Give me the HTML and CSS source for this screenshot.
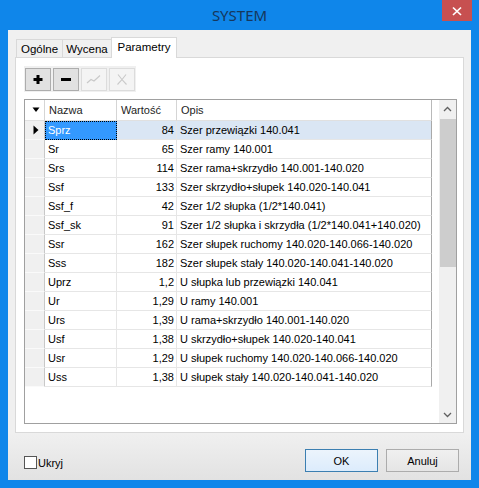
FILE: index.html
```html
<!DOCTYPE html>
<html lang="pl">
<head>
<meta charset="utf-8">
<title>SYSTEM</title>
<link rel="stylesheet" href="styles.css">
</head>
<body>
<div class="window">
  <div class="titlebar">
    <div class="title">SYSTEM</div>
    <div class="close">
      <svg width="30" height="21" viewBox="0 0 30 21"><path d="M11 7.5 L19 15 M19 7.5 L11 15" stroke="#fff" stroke-width="1.7" fill="none"/></svg>
    </div>
  </div>
  <div class="client">
    <div class="tabs">
      <div class="tab t1">Ogólne</div>
      <div class="tab t2">Wycena</div>
      <div class="tab t3 active">Parametry</div>
    </div>
    <div class="panel">
      <div class="toolbar">
        <div class="tbtn">
          <svg width="24" height="21" viewBox="0 0 24 21"><path d="M12 6 V15 M7.5 10.5 H16.5" stroke="#000" stroke-width="3" fill="none"/></svg>
        </div>
        <div class="tbtn">
          <svg width="24" height="21" viewBox="0 0 24 21"><path d="M7 10.5 H17" stroke="#000" stroke-width="3" fill="none"/></svg>
        </div>
        <div class="tbtn disabled">
          <svg width="24" height="21" viewBox="0 0 24 21"><path d="M5 14 L9 10.5 L12 12 L18 6.5" stroke="#c9c9c9" stroke-width="1.2" fill="none"/></svg>
        </div>
        <div class="tbtn disabled">
          <svg width="24" height="21" viewBox="0 0 24 21"><path d="M8 5.5 Q12 11 16.5 15.5 M16 5.5 Q12 11 7.5 15.5" stroke="#c9c9c9" stroke-width="1.1" fill="none"/></svg>
        </div>
      </div>
      <div class="grid">
        <div class="table">
          <div class="row head">
            <div class="cell ind"><svg width="8" height="6" viewBox="0 0 8 6"><path d="M0.5 0.5 H7.5 L4 5 Z" fill="#000"/></svg></div>
            <div class="cell">Nazwa</div>
            <div class="cell">Wartość</div>
            <div class="cell">Opis</div>
          </div>
          <div class="row sel">
            <div class="cell ind"><svg width="6" height="10" viewBox="0 0 6 10"><path d="M0.5 0.5 L5.5 5 L0.5 9.5 Z" fill="#000"/></svg></div>
            <div class="cell name focus">Sprz</div>
            <div class="cell val">84</div>
            <div class="cell">Szer przewiązki 140.041</div>
          </div>
          <div class="row"><div class="cell ind"></div><div class="cell name">Sr</div><div class="cell val">65</div><div class="cell">Szer ramy 140.001</div></div>
          <div class="row"><div class="cell ind"></div><div class="cell name">Srs</div><div class="cell val">114</div><div class="cell">Szer rama+skrzydło 140.001-140.020</div></div>
          <div class="row"><div class="cell ind"></div><div class="cell name">Ssf</div><div class="cell val">133</div><div class="cell">Szer skrzydło+słupek 140.020-140.041</div></div>
          <div class="row"><div class="cell ind"></div><div class="cell name">Ssf_f</div><div class="cell val">42</div><div class="cell">Szer 1/2 słupka (1/2*140.041)</div></div>
          <div class="row"><div class="cell ind"></div><div class="cell name">Ssf_sk</div><div class="cell val">91</div><div class="cell">Szer 1/2 słupka i skrzydła (1/2*140.041+140.020)</div></div>
          <div class="row"><div class="cell ind"></div><div class="cell name">Ssr</div><div class="cell val">162</div><div class="cell">Szer słupek ruchomy 140.020-140.066-140.020</div></div>
          <div class="row"><div class="cell ind"></div><div class="cell name">Sss</div><div class="cell val">182</div><div class="cell">Szer słupek stały 140.020-140.041-140.020</div></div>
          <div class="row"><div class="cell ind"></div><div class="cell name">Uprz</div><div class="cell val">1,2</div><div class="cell">U słupka lub przewiązki 140.041</div></div>
          <div class="row"><div class="cell ind"></div><div class="cell name">Ur</div><div class="cell val">1,29</div><div class="cell">U ramy 140.001</div></div>
          <div class="row"><div class="cell ind"></div><div class="cell name">Urs</div><div class="cell val">1,39</div><div class="cell">U rama+skrzydło 140.001-140.020</div></div>
          <div class="row"><div class="cell ind"></div><div class="cell name">Usf</div><div class="cell val">1,38</div><div class="cell">U skrzydło+słupek 140.020-140.041</div></div>
          <div class="row"><div class="cell ind"></div><div class="cell name">Usr</div><div class="cell val">1,29</div><div class="cell">U słupek ruchomy 140.020-140.066-140.020</div></div>
          <div class="row"><div class="cell ind"></div><div class="cell name">Uss</div><div class="cell val">1,38</div><div class="cell">U słupek stały 140.020-140.041-140.020</div></div>
        </div>
        <div class="vscroll">
          <div class="arrow"><svg width="9" height="6" viewBox="0 0 9 6"><path d="M1 5 L4.5 1.5 L8 5" stroke="#606060" stroke-width="1.3" fill="none"/></svg></div>
          <div class="track"><div class="thumb"></div></div>
          <div class="arrow"><svg width="9" height="6" viewBox="0 0 9 6"><path d="M1 1 L4.5 4.5 L8 1" stroke="#606060" stroke-width="1.3" fill="none"/></svg></div>
        </div>
      </div>
    </div>
    <div class="footer">
      <div class="check"><span class="box"></span><span>Ukryj</span></div>
      <div class="buttons">
        <div class="btn default">OK</div>
        <div class="btn">Anuluj</div>
      </div>
    </div>
  </div>
</div>
</body>
</html>
```

FILE: styles.css
```css
* { box-sizing: border-box; }
html, body { margin: 0; padding: 0; }
body {
  width: 479px;
  height: 488px;
  overflow: hidden;
  font-family: "Liberation Sans", Arial, sans-serif;
  font-size: 11px;
  color: #000;
}
.window {
  width: 479px;
  height: 488px;
  background: #0f86ea;
  display: flex;
  flex-direction: column;
}
.titlebar {
  height: 30px;
  display: flex;
  align-items: flex-start;
  padding-left: 37px;
  padding-right: 7px;
}
.title {
  flex: 1;
  text-align: center;
  font-family: "Noto Sans", "Open Sans", sans-serif;
  font-size: 15px;
  line-height: 30px;
  color: #16375c;
}
.close {
  width: 30px;
  height: 21px;
  background: #c75050;
  display: flex;
}
.client {
  flex: 1;
  margin: 0 8px 8px 8px;
  background: #f0f0f0;
  display: flex;
  flex-direction: column;
}
.tabs {
  height: 20px;
  margin-top: 7px;
  margin-left: 8px;
  display: flex;
  align-items: flex-end;
  position: relative;
  z-index: 1;
}
.tab {
  height: 18px;
  border: 1px solid #d9d9d9;
  border-bottom: none;
  background: #f0f0f0;
  display: flex;
  align-items: center;
  justify-content: center;
  padding-top: 1px;
  margin-left: -1px;
  font-size: 11.5px;
}
.tab.t1 { width: 47px; margin-left: 0; }
.tab.t2 { width: 50px; }
.tab.t3 { width: 66px; }
.tab.active {
  height: 21px;
  margin-bottom: -1px;
  background: #fff;
  padding-bottom: 3px;
}
.panel {
  height: 376px;
  margin: 0 7px;
  border: 1px solid #d9d9d9;
  background: #fff;
  padding: 8px 6px 8px 8px;
  display: flex;
  flex-direction: column;
}
.toolbar {
  width: 112px;
  height: 26px;
  background: #f0f0f0;
  padding: 2px 1px 1px 1px;
  display: flex;
  gap: 2px;
}
.tbtn {
  width: 26px;
  height: 23px;
  border: 1px solid #adadad;
  background: #e1e1e1;
  display: flex;
}
.tbtn.disabled {
  border-color: #dcdcdc;
  background: #f4f4f4;
}
.grid {
  margin-top: 7px;
  flex: 1;
  border: 1px solid #a0a0a0;
  display: flex;
  background: #fff;
}
.table {
  flex: 1;
  display: flex;
  flex-direction: column;
}
.row {
  display: grid;
  grid-template-columns: 20px 72px 60px 255px;
  height: 19px;
}
.row.head { height: 21px; }
.cell {
  border-right: 1px solid #e6e6e6;
  border-bottom: 1px solid #e6e6e6;
  padding: 0 3px;
  display: flex;
  align-items: center;
  white-space: nowrap;
  overflow: hidden;
  line-height: 13px;
}
.row.head .cell {
  border-right: 1px solid #d5d5d5;
  border-bottom: 1px solid #e0e0e0;
  color: #1e1e1e;
  padding-left: 4px;
}
.row.head .cell:last-child { border-right: 1px solid #b9b9b9; }
.cell:last-child { border-right: 1px solid #a9a9a9; }
.cell.ind {
  background: #f0f0f0;
  border-right: 1px solid #c8c8c8;
  border-bottom: 1px solid #fafafa;
  padding: 0;
  justify-content: center;
}
.row.head .cell.ind {
  background: #fff;
  padding-left: 2px;
  border-right: 1px solid #d5d5d5;
  border-bottom: 1px solid #e0e0e0;
}
.cell.val {
  justify-content: flex-end;
  padding-right: 2px;
}
.row.sel .cell { background: #dae6f4; }
.row.sel .cell.ind { background: #f0f0f0; }
.row.sel .cell.ind { justify-content: flex-start; padding-left: 8px; }
.row.sel .cell.focus {
  background: #3399ff;
  color: #fff;
  border: 1px dotted #000;
  padding-left: 2px;
}
.vscroll {
  width: 17px;
  margin-left: 6px;
  background: #f0f0f0;
  display: flex;
  flex-direction: column;
}
.arrow {
  height: 17px;
  display: flex;
  align-items: center;
  justify-content: center;
}
.track {
  flex: 1;
  padding: 2px 0 0 1px;
}
.thumb {
  height: 148px;
  background: #cdcdcd;
}
.footer {
  height: 47px;
  padding: 16px 12px 0 16px;
  display: flex;
  justify-content: space-between;
  align-items: flex-start;
  background: linear-gradient(#f0f0f0, #e2e2e2);
}
.check {
  display: flex;
  align-items: center;
  margin-top: 7px;
  gap: 1px;
}
.box {
  width: 13px;
  height: 13px;
  border: 1px solid #555;
  background: #fff;
}
.buttons {
  display: flex;
  gap: 8px;
}
.btn {
  width: 73px;
  height: 23px;
  border: 1px solid #acacac;
  background: linear-gradient(#f0f0f0, #e5e5e5);
  display: flex;
  align-items: center;
  justify-content: center;
}
.btn.default {
  border-color: #3c7fb1;
  background: linear-gradient(#ecf4fc, #dcecfc);
}
```
